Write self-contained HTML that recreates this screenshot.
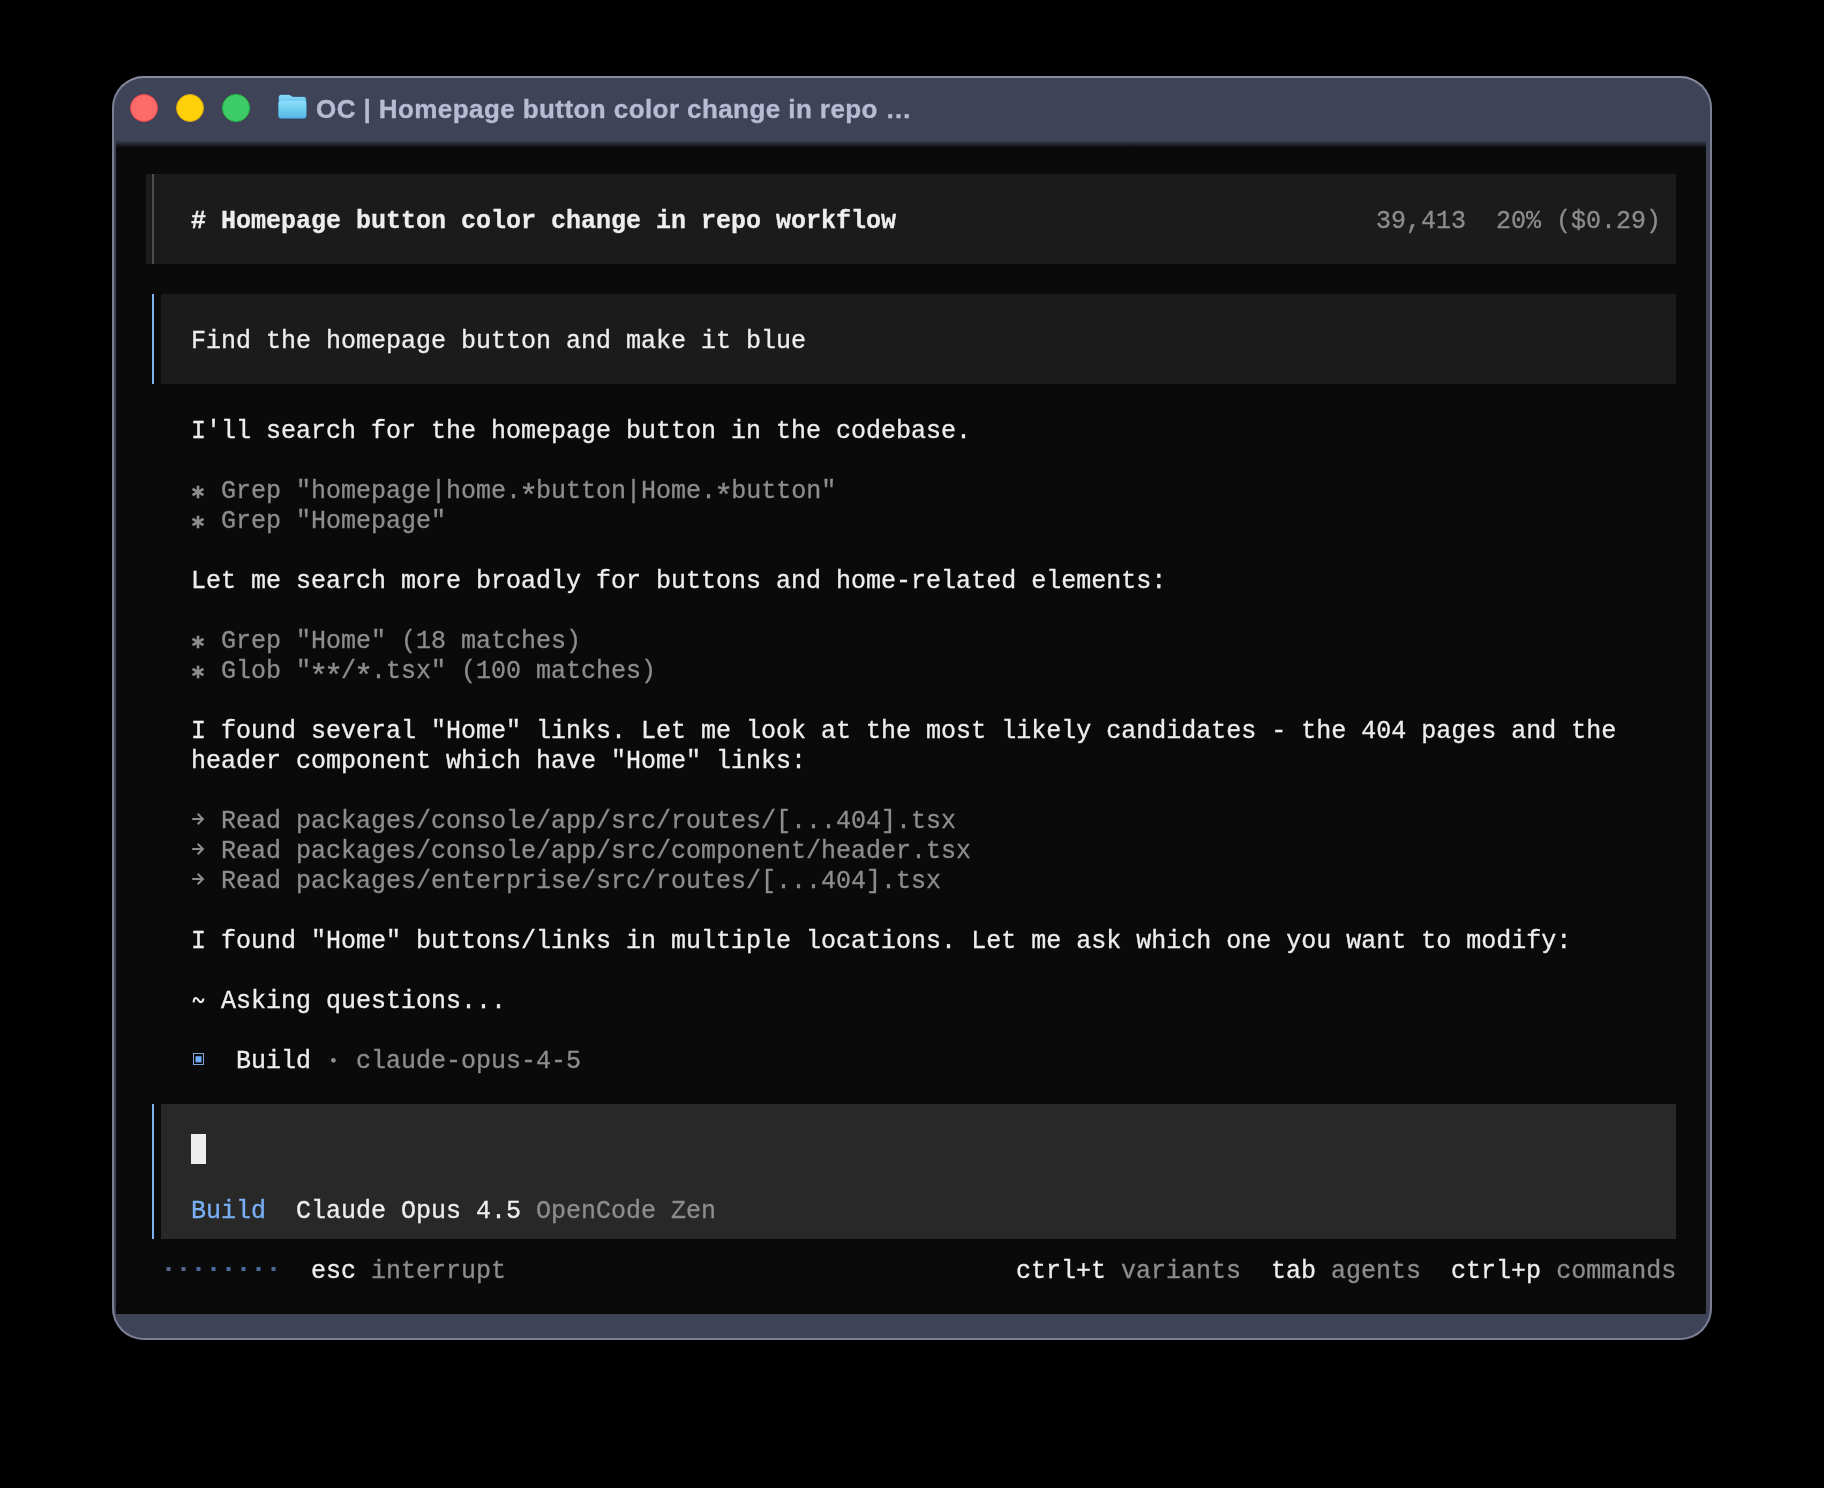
<!DOCTYPE html>
<html>
<head>
<meta charset="utf-8">
<title>OC | Homepage button color change in repo workflow</title>
<style>
html,body{margin:0;padding:0;background:#000;}
body{width:1824px;height:1488px;position:relative;overflow:hidden;font-family:"Liberation Mono",monospace;}
#win{position:absolute;left:112px;top:76px;width:1600px;height:1264px;box-sizing:border-box;border-radius:32px;background:#3f4358;overflow:hidden;}
#winborder{position:absolute;left:112px;top:76px;width:1600px;height:1264px;box-sizing:border-box;border-radius:32px;border:2px solid #7b7e90;border-top-color:#888b9d;pointer-events:none;}
#term{will-change:transform;position:absolute;left:4px;top:68px;width:1590px;height:1170px;background:#0a0a0a;overflow:hidden;}
#tshadow{position:absolute;left:4px;top:64px;width:1590px;height:8px;z-index:5;background:linear-gradient(to bottom,#3f4358 0%,#393c4e 15%,#24262f 50%,#101014 85%,#0a0a0a 100%);}
.tl{position:absolute;top:18px;width:28px;height:28px;border-radius:50%;box-sizing:border-box;}
#title{will-change:transform;position:absolute;left:204px;top:17px;height:32px;line-height:32px;font-family:"Liberation Sans",sans-serif;font-weight:bold;font-size:26px;color:#b8bbd4;white-space:pre;letter-spacing:0.42px;-webkit-text-stroke:0.35px #b8bbd4;}
.r{position:absolute;left:0;height:30px;line-height:30px;font-size:25px;white-space:pre;color:#eeeeee;margin-top:3px;-webkit-text-stroke:0.3px;}
.m{color:#8d8d8d;}
.b{font-weight:bold;}
.a{display:inline-block;transform:translateY(6px) scale(1.28);}
.blue{color:#79b0f5;}
.bg{position:absolute;}
svg{position:absolute;overflow:visible;}
</style>
</head>
<body>
<div id="win">
  <!-- traffic lights -->
  <div class="tl" style="left:18px;background:#fe6a68;border:1.3px solid #f0474a;"></div>
  <div class="tl" style="left:64px;background:#fdd00a;border:1.3px solid #d9a80c;"></div>
  <div class="tl" style="left:110px;background:#3ccb66;border:1.3px solid #22be4c;"></div>
  <!-- folder icon -->
  <svg id="folder" style="left:165.5px;top:17.5px;" width="29" height="25" viewBox="0 0 29 25">
    <defs>
      <linearGradient id="fb" x1="0" y1="0" x2="0" y2="1">
        <stop offset="0" stop-color="#8fdafb"/>
        <stop offset="0.7" stop-color="#3fa8dd"/>
        <stop offset="1" stop-color="#3fa8dd"/>
      </linearGradient>
      <linearGradient id="fg" x1="0" y1="0" x2="0" y2="1">
        <stop offset="0" stop-color="#8cddfd"/>
        <stop offset="0.5" stop-color="#6ccdee"/>
        <stop offset="1" stop-color="#57b4e8"/>
      </linearGradient>
    </defs>
    <path d="M0.4 3.4 Q0.4 0.4 3.4 0.4 L10.5 0.4 Q12 0.4 12.8 1.3 L13.6 2.1 Q14 2.5 15 2.5 L25.5 2.5 Q28.4 2.5 28.4 5.4 L28.4 21.5 Q28.4 24.5 25.4 24.5 L3.4 24.5 Q0.4 24.5 0.4 21.5 Z" fill="url(#fb)" stroke="#1e3a55" stroke-opacity="0.75" stroke-width="0.8"/>
    <path d="M0.4 9.5 Q0.4 6.7 3.2 6.7 L25.6 6.7 Q28.4 6.7 28.4 9.5 L28.4 21.5 Q28.4 24.5 25.4 24.5 L3.4 24.5 Q0.4 24.5 0.4 21.5 Z" fill="url(#fg)"/>
  </svg>
  <div id="title">OC | Homepage button color change in repo …</div>
  <div id="tshadow"></div>
  <div id="term">
    <!-- panels -->
    <div class="bg" style="left:30px;top:30px;width:1530px;height:90px;background:#1b1b1b;"></div>
    <div class="bg" style="left:36px;top:30px;width:2px;height:90px;background:#4e4e4e;"></div>

    <div class="bg" style="left:36px;top:150px;width:2px;height:90px;background:#7fb0f0;"></div>
    <div class="bg" style="left:45px;top:150px;width:1515px;height:90px;background:#1b1b1b;"></div>

    <div class="bg" style="left:36px;top:960px;width:2px;height:135px;background:#7fb0f0;"></div>
    <div class="bg" style="left:45px;top:960px;width:1515px;height:135px;background:#282828;"></div>
    <div class="bg" style="left:75px;top:990px;width:15px;height:30px;background:#eeeeee;"></div>

    <!-- icons -->
    <svg style="left:81.5px;top:347.7px;" width="1" height="1"><g stroke="#8d8d8d" stroke-width="2.6" stroke-linecap="butt"><line x1="0" y1="-6.3" x2="0" y2="6.3"/><line x1="-5.46" y1="-3.15" x2="5.46" y2="3.15"/><line x1="-5.46" y1="3.15" x2="5.46" y2="-3.15"/></g></svg>
    <svg style="left:81.5px;top:377.7px;" width="1" height="1"><g stroke="#8d8d8d" stroke-width="2.6" stroke-linecap="butt"><line x1="0" y1="-6.3" x2="0" y2="6.3"/><line x1="-5.46" y1="-3.15" x2="5.46" y2="3.15"/><line x1="-5.46" y1="3.15" x2="5.46" y2="-3.15"/></g></svg>
    <svg style="left:81.5px;top:497.7px;" width="1" height="1"><g stroke="#8d8d8d" stroke-width="2.6" stroke-linecap="butt"><line x1="0" y1="-6.3" x2="0" y2="6.3"/><line x1="-5.46" y1="-3.15" x2="5.46" y2="3.15"/><line x1="-5.46" y1="3.15" x2="5.46" y2="-3.15"/></g></svg>
    <svg style="left:81.5px;top:527.7px;" width="1" height="1"><g stroke="#8d8d8d" stroke-width="2.6" stroke-linecap="butt"><line x1="0" y1="-6.3" x2="0" y2="6.3"/><line x1="-5.46" y1="-3.15" x2="5.46" y2="3.15"/><line x1="-5.46" y1="3.15" x2="5.46" y2="-3.15"/></g></svg>
    <svg style="left:76.3px;top:674.8px;" width="1" height="1"><g stroke="#8d8d8d" stroke-width="2" fill="none" stroke-linecap="butt" stroke-linejoin="miter"><line x1="0.2" y1="0" x2="10.6" y2="0"/><polyline points="5.7,-5.2 10.9,0 5.7,5.2"/></g></svg>
    <svg style="left:76.3px;top:704.8px;" width="1" height="1"><g stroke="#8d8d8d" stroke-width="2" fill="none" stroke-linecap="butt" stroke-linejoin="miter"><line x1="0.2" y1="0" x2="10.6" y2="0"/><polyline points="5.7,-5.2 10.9,0 5.7,5.2"/></g></svg>
    <svg style="left:76.3px;top:734.8px;" width="1" height="1"><g stroke="#8d8d8d" stroke-width="2" fill="none" stroke-linecap="butt" stroke-linejoin="miter"><line x1="0.2" y1="0" x2="10.6" y2="0"/><polyline points="5.7,-5.2 10.9,0 5.7,5.2"/></g></svg>
    <svg style="left:77px;top:909px;" width="11" height="12"><rect x="0.5" y="0.5" width="10" height="11" fill="none" stroke="#8fb6ee" stroke-width="0.9"/><rect x="2.5" y="3.2" width="6" height="6.2" fill="#6dabfb"/></svg>
    <svg style="left:0;top:0;" width="1" height="1"><rect x="50.5" y="1123" width="4" height="4" fill="#55688c"/><rect x="65.5" y="1123" width="4" height="4" fill="#55688c"/><rect x="80.5" y="1123" width="4" height="4" fill="#4a699a"/><rect x="95.5" y="1123" width="4" height="4" fill="#4a6b9e"/><rect x="110.5" y="1123" width="4" height="4" fill="#4a6b9e"/><rect x="125.5" y="1123" width="4" height="4" fill="#4a6b9e"/><rect x="140.5" y="1123" width="4" height="4" fill="#4c6a98"/><rect x="155.5" y="1123" width="4" height="4" fill="#4c6a98"/></svg>
    <!-- text rows -->
    <div class="r b" style="top:60px;left:75px;"># Homepage button color change in repo workflow</div>
    <div class="r m" style="top:60px;left:1260px;">39,413  20% ($0.29)</div>

    <div class="r" style="top:180px;left:75px;">Find the homepage button and make it blue</div>

    <div class="r" style="top:270px;left:75px;">I'll search for the homepage button in the codebase.</div>

    <div class="r m" style="top:330px;left:105px;">Grep "homepage|home.<span class="a">*</span>button|Home.<span class="a">*</span>button"</div>
    <div class="r m" style="top:360px;left:105px;">Grep "Homepage"</div>

    <div class="r" style="top:420px;left:75px;">Let me search more broadly for buttons and home-related elements:</div>

    <div class="r m" style="top:480px;left:105px;">Grep "Home" (18 matches)</div>
    <div class="r m" style="top:510px;left:105px;">Glob "<span class="a">*</span><span class="a">*</span>/<span class="a">*</span>.tsx" (100 matches)</div>

    <div class="r" style="top:570px;left:75px;">I found several "Home" links. Let me look at the most likely candidates - the 404 pages and the</div>
    <div class="r" style="top:600px;left:75px;">header component which have "Home" links:</div>

    <div class="r m" style="top:660px;left:105px;">Read packages/console/app/src/routes/[...404].tsx</div>
    <div class="r m" style="top:690px;left:105px;">Read packages/console/app/src/component/header.tsx</div>
    <div class="r m" style="top:720px;left:105px;">Read packages/enterprise/src/routes/[...404].tsx</div>

    <div class="r" style="top:780px;left:75px;">I found "Home" buttons/links in multiple locations. Let me ask which one you want to modify:</div>

    <svg style="left:0;top:0;" width="1" height="1"><path d="M77.6,858.4 C77.8,855.5 78.8,854 80,854 C82,854 82.8,858.1 84.8,858.1 C86.3,858.1 87.2,856.5 87.4,854.5" fill="none" stroke="#eeeeee" stroke-width="2.1"/></svg>
    <div class="r" style="top:840px;left:105px;">Asking questions...</div>

    <div class="r" style="top:900px;left:120px;">Build <span class="m">  claude-opus-4-5</span></div>
    <svg style="left:0;top:0;" width="1" height="1"><circle cx="217.4" cy="916.3" r="2.4" fill="#8d8d8d"/></svg>

    <div class="r" style="top:1050px;left:75px;"><span class="blue">Build</span>  Claude Opus 4.5 <span class="m">OpenCode Zen</span></div>

    <div class="r" style="top:1110px;left:195px;">esc <span class="m">interrupt</span></div>
    <div class="r" style="top:1110px;left:900px;">ctrl+t <span class="m">variants</span>  tab <span class="m">agents</span>  ctrl+p <span class="m">commands</span></div>
  </div>
</div>
<div id="winborder"></div>
</body>
</html>
